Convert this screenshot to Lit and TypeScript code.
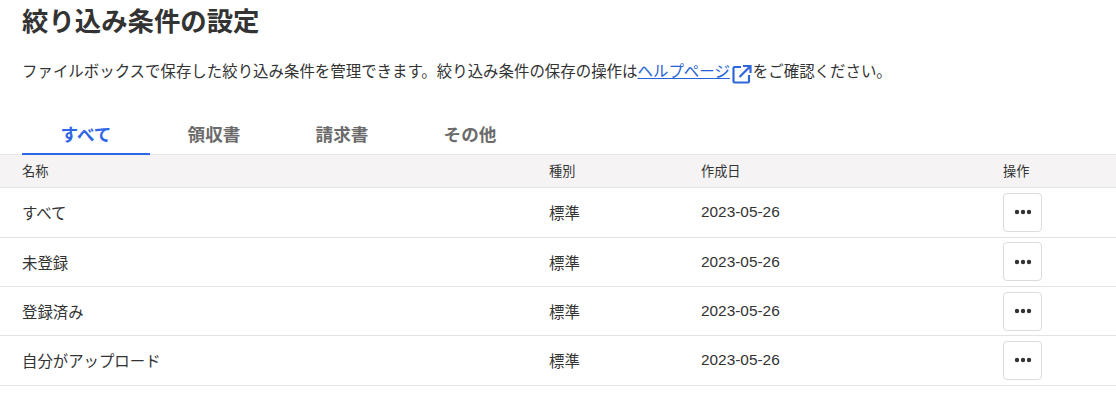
import { LitElement, html, css, svg } from "lit";
import { customElement } from "lit/decorators.js";

const rows = ["すべて", "未登録", "登録済み", "自分がアップロード"];

@customElement("app-root")
export class AppRoot extends LitElement {
  static styles = css`
    :host {
      display: block;
      width: 1116px;
      height: 408px;
      overflow: hidden;
      background: #fff;
      color: #333;
      font-family: "Liberation Sans", "Noto Sans CJK JP", sans-serif;
    }
    h1 {
      margin: 0;
      padding: 5px 0 0 22px;
      font-size: 26.4px;
      line-height: 34px;
      font-weight: 700;
      color: #333;
    }
    .desc {
      margin: 0;
      padding: 18px 0 0 22px;
      font-size: 15.45px;
      line-height: 30px;
      display: flex;
      align-items: center;
    }
    .desc a {
      color: #2563d6;
      text-decoration: underline;
    }
    .ext {
      width: 20px;
      height: 20px;
      margin: 3px 1px 0 2px;
      flex: none;
    }
    .tabs {
      display: flex;
      padding: 31px 0 0 22px;
    }
    .tab {
      width: 128px;
      height: 37px;
      box-sizing: border-box;
      text-align: center;
      font-size: 17.6px;
      font-weight: 700;
      line-height: 35px;
      color: #6b6b6b;
    }
    .tab.on {
      color: #2f66e8;
      border-bottom: 2px solid #2f66e8;
    }
    .row {
      display: grid;
      grid-template-columns: 527px 152px 302px 1fr;
      padding-left: 22px;
      align-items: center;
      border-bottom: 1px solid #e3e3e3;
      font-size: 15.4px;
      height: 49.3px;
      box-sizing: border-box;
    }
    .head {
      height: 34.35px;
      padding-bottom: 2px;
      background: #f5f3f4;
      border-top: 1px solid #e6e6e6;
      margin-top: -1px;
      font-size: 13.2px;
    }
    .btn {
      width: 39px;
      height: 39px;
      box-sizing: border-box;
      border: 1px solid #dcdcdc;
      border-radius: 4px;
      background: #fff;
      display: flex;
      align-items: center;
      justify-content: center;
      padding: 0;
    }
    .btn svg {
      width: 18px;
      height: 6px;
      display: block;
    }
  `;

  render() {
    return html`
      <h1>絞り込み条件の設定</h1>
      <p class="desc">
        <span>ファイルボックスで保存した絞り込み条件を管理できます。絞り込み条件の保存の操作は</span><a href="#">ヘルプページ</a>
        <svg class="ext" viewBox="0 0 20 20" fill="none" stroke="#2f66d8" stroke-width="2.2">
          ${svg`<path d="M9 3H2.500a1 1 0 0 0-1 1v13.500a1 1 0 0 0 1 1H16a1 1 0 0 0 1-1V11"/><path d="M7.500 13L18 2.500M11 2H18.500V9"/>`}
        </svg>
        <span>をご確認ください。</span>
      </p>
      <div class="tabs">
        <div class="tab on">すべて</div>
        <div class="tab">領収書</div>
        <div class="tab">請求書</div>
        <div class="tab">その他</div>
      </div>
      <div class="row head"><span>名称</span><span>種別</span><span>作成日</span><span>操作</span></div>
      ${rows.map(
        (r) => html`<div class="row">
          <span>${r}</span><span>標準</span><span>2023-05-26</span>
          <button class="btn" aria-label="操作">
            <svg viewBox="0 0 18 6" fill="#333">
              <circle cx="3" cy="3" r="2.2"></circle><circle cx="9" cy="3" r="2.2"></circle><circle cx="15" cy="3" r="2.2"></circle>
            </svg>
          </button>
        </div>`
      )}
    `;
  }
}
